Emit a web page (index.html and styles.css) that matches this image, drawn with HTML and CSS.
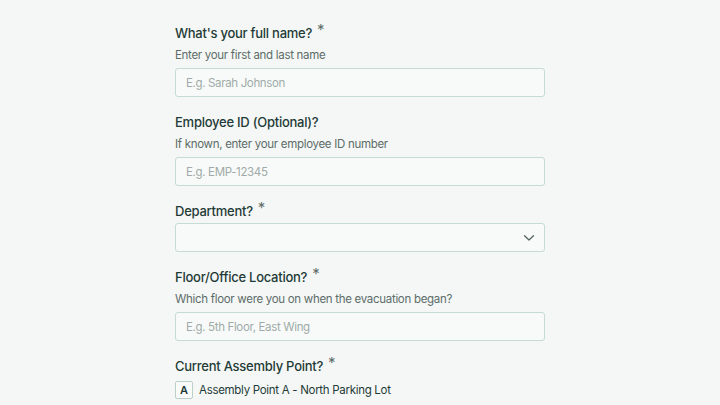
FILE: index.html
```html
<!DOCTYPE html>
<html lang="en">
<head>
<meta charset="utf-8">
<link rel="stylesheet" href="styles.css">
</head>
<body>
<main class="form">
  <div class="field">
    <div class="label">What's your full name?<span class="req">*</span></div>
    <div class="desc">Enter your first and last name</div>
    <div class="input"><span class="ph">E.g. Sarah Johnson</span></div>
  </div>
  <div class="field">
    <div class="label">Employee ID (Optional)?</div>
    <div class="desc">If known, enter your employee ID number</div>
    <div class="input"><span class="ph">E.g. EMP-12345</span></div>
  </div>
  <div class="field">
    <div class="label">Department?<span class="req">*</span></div>
    <div class="input select">
      <svg class="chev" width="12" height="8" viewBox="0 0 12 8"><path d="M1.5 1.8 L6 6 L10.5 1.8" fill="none" stroke="#56655f" stroke-width="1.3" stroke-linecap="round" stroke-linejoin="round"/></svg>
    </div>
  </div>
  <div class="field">
    <div class="label">Floor/Office Location?<span class="req">*</span></div>
    <div class="desc">Which floor were you on when the evacuation began?</div>
    <div class="input"><span class="ph">E.g. 5th Floor, East Wing</span></div>
  </div>
  <div class="field">
    <div class="label">Current Assembly Point?<span class="req">*</span></div>
    <div class="option"><span class="key">A</span><span class="opt-text">Assembly Point A - North Parking Lot</span></div>
  </div>
</main>
</body>
</html>
```
FILE: styles.css
```css
html, body {
  margin: 0;
  padding: 0;
  background: #f4f7f6;
  font-family: Inter, "Noto Sans", sans-serif;
}
.form {
  width: 370px;
  margin: 0 auto;
  padding-top: 23px;
  display: flex;
  flex-direction: column;
  gap: 15px;
}
.field {
  display: flex;
  flex-direction: column;
}
.label {
  font-size: 13px;
  line-height: 20px;
  font-weight: 500;
  letter-spacing: -0.25px;
  color: #1f3b37;
  margin-bottom: 2px;
}
.req {
  color: #5f6e6b;
  font-size: 15px;
  font-weight: 400;
  position: relative;
  top: -3px;
  margin-left: 5px;
  letter-spacing: 0;
}
.desc {
  font-size: 11.5px;
  line-height: 18px;
  letter-spacing: -0.3px;
  color: #5d6c69;
  margin-top: 1px;
  margin-bottom: 4px;
}
.input {
  height: 27px;
  border: 1px solid #c6dbd4;
  border-radius: 3px;
  background: #f8faf9;
  display: flex;
  align-items: center;
  padding: 0 10px;
}
.ph {
  font-size: 11.5px;
  letter-spacing: -0.35px;
  color: #9faba8;
}
.select {
  justify-content: flex-end;
  padding-right: 9px;
}
.option {
  display: flex;
  align-items: center;
  gap: 6px;
  margin-top: 3px;
}
.key {
  width: 16px;
  height: 16px;
  border: 1px solid #bcd0ca;
  border-radius: 2px;
  background: #fafcfb;
  font-size: 11px;
  font-weight: 600;
  color: #1f3b37;
  display: flex;
  align-items: center;
  justify-content: center;
}
.opt-text {
  font-size: 11.5px;
  letter-spacing: -0.3px;
  color: #1f3b37;
}
```
